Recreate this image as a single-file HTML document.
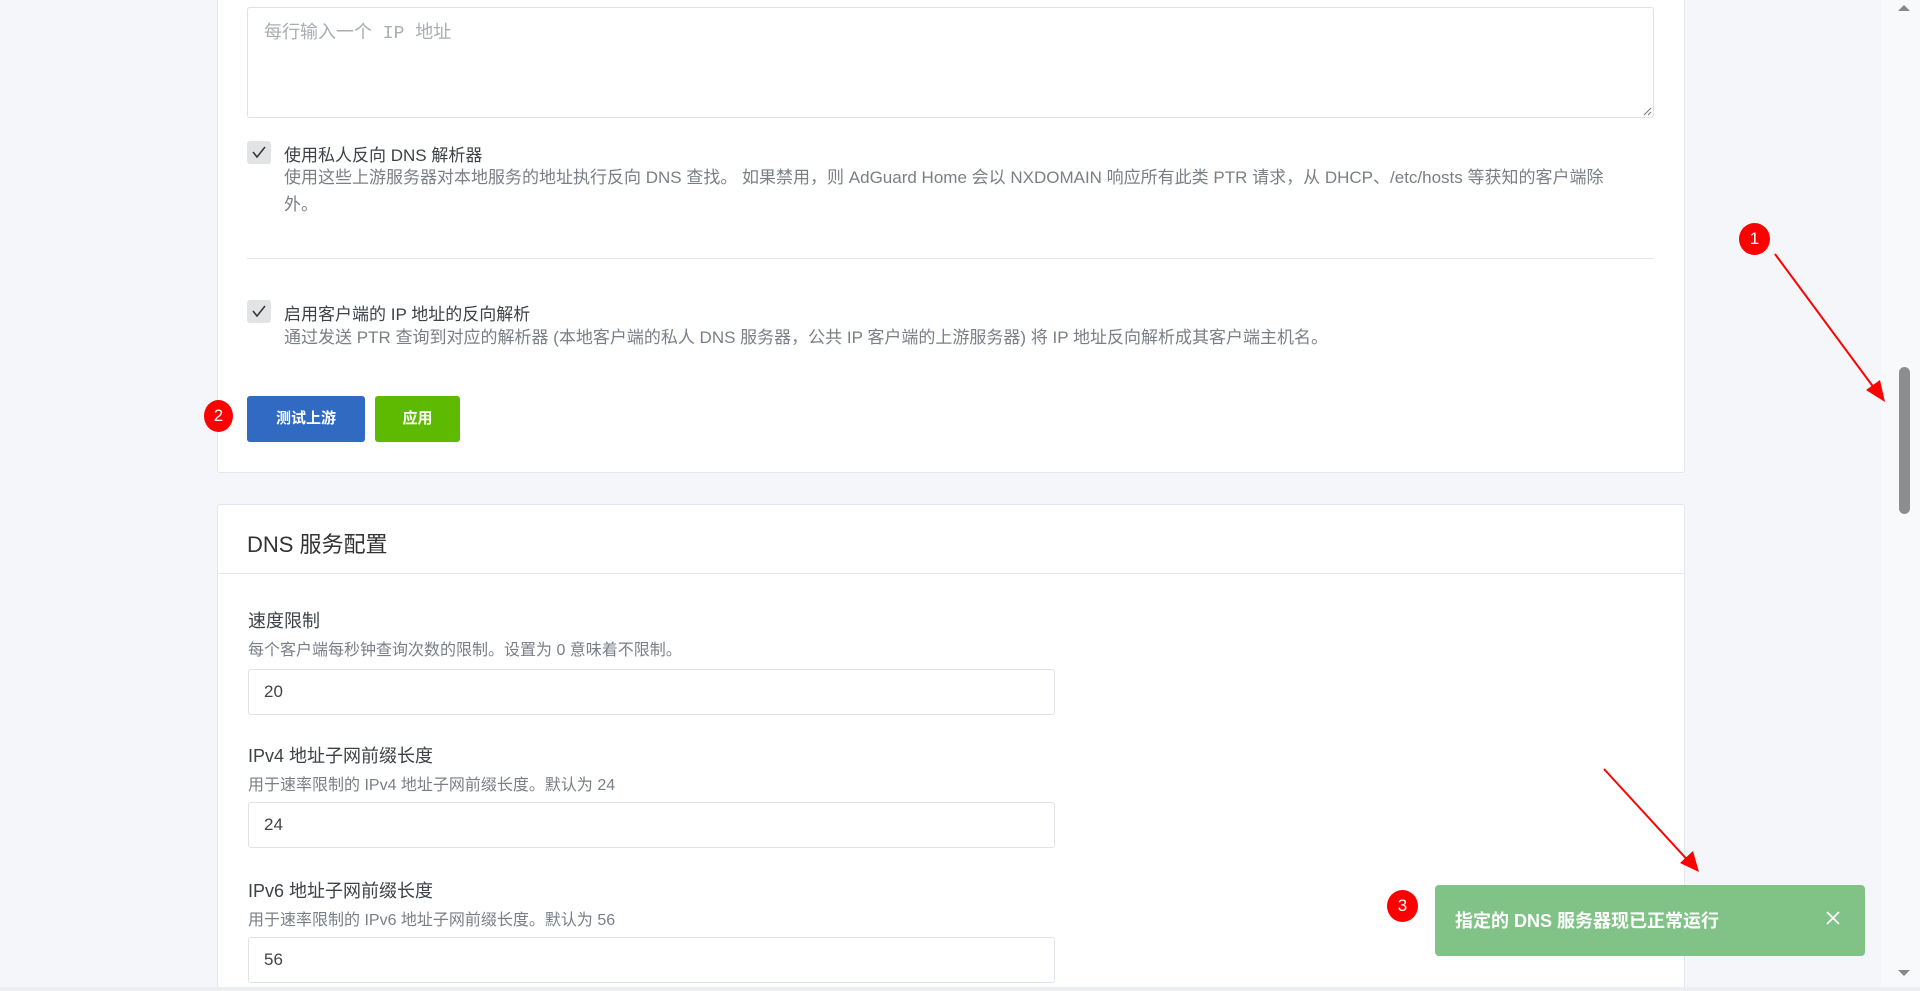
<!DOCTYPE html>
<html><head><meta charset="utf-8"><style>
*{box-sizing:border-box;margin:0;padding:0}
html,body{width:1920px;height:991px;overflow:hidden}
body{background:#f4f6fa;font-family:"Liberation Sans","Noto Sans CJK SC",sans-serif;color:#495057;position:relative}
.card{position:absolute;left:217px;width:1468px;background:#fff;border:1px solid #e3e6ec;border-radius:3px}
.abs{position:absolute}
.cb{position:absolute;width:24px;height:23px;background:#e2e3e5;border-radius:3px}
.cb svg{position:absolute;left:5px;top:5px}
.lbl{position:absolute;font-size:17px;color:#3d4248;white-space:nowrap}
.desc{position:absolute;font-size:17px;color:#7a7f87;line-height:27px}
.small{position:absolute;font-size:16px;color:#7a7f87;white-space:nowrap}
.inp{position:absolute;left:30px;width:807px;height:46px;border:1px solid #dfe2e6;border-radius:3px;font-size:17px;padding:12px 15px;color:#444}
.btn{position:absolute;top:396px;height:46px;color:#fff;font-weight:bold;font-size:15px;text-align:center;line-height:46px;border-radius:3px}
.badge{position:absolute;background:#f00;color:#fff;border-radius:50%;text-align:center;font-size:17px}
</style></head><body>
<div class="card" style="top:-4px;height:477px"></div>
<div class="abs" style="left:247px;top:7px;width:1407px;height:111px;border:1px solid #dfe2e6;border-radius:3px"></div>
<div class="abs" style="left:264px;top:18px;font-size:18px;color:#a8adb3;font-family:'Liberation Mono','Noto Sans CJK SC',monospace">每行输入一个 IP 地址</div>
<svg class="abs" style="left:1642px;top:106px" width="10" height="10"><path d="M9 2L2 9M9 6L6 9" stroke="#777" stroke-width="1"/></svg>

<div class="cb" style="left:247px;top:141px"><svg width="14" height="13"><path d="M1 6L5 11L13 1" stroke="#333" stroke-width="1.5" fill="none"/></svg></div>
<div class="lbl" style="left:284px;top:141px">使用私人反向 DNS 解析器</div>
<div class="desc" style="left:284px;top:164px;width:1330px">使用这些上游服务器对本地服务的地址执行反向 DNS 查找。 如果禁用，则 AdGuard Home 会以 NXDOMAIN 响应所有此类 PTR 请求，从 DHCP、/etc/hosts 等获知的客户端除外。</div>
<div class="abs" style="left:247px;top:258px;width:1407px;height:1px;background:#e3e6ec"></div>
<div class="cb" style="left:247px;top:300px"><svg width="14" height="13"><path d="M1 6L5 11L13 1" stroke="#333" stroke-width="1.5" fill="none"/></svg></div>
<div class="lbl" style="left:284px;top:300px">启用客户端的 IP 地址的反向解析</div>
<div class="desc" style="left:284px;top:324px;white-space:nowrap">通过发送 PTR 查询到对应的解析器 (本地客户端的私人 DNS 服务器，公共 IP 客户端的上游服务器) 将 IP 地址反向解析成其客户端主机名。</div>
<div class="btn" style="left:247px;width:118px;background:#316ac2">测试上游</div>
<div class="btn" style="left:375px;width:85px;background:#5eba00">应用</div>
<div class="badge" style="left:204px;top:400px;width:29px;height:32px;line-height:32px">2</div>

<div class="card" style="top:504px;height:500px">
 <div class="abs" style="left:0;top:68px;width:100%;height:1px;background:#e3e6ec"></div>
 <div class="abs" style="left:29px;top:22px;font-size:22px;color:#333">DNS 服务配置</div>
 <div class="lbl" style="left:30px;top:102px;font-size:18px">速度限制</div>
 <div class="small" style="left:30px;top:131px">每个客户端每秒钟查询次数的限制。设置为 0 意味着不限制。</div>
 <div class="inp" style="top:164px">20</div>
 <div class="lbl" style="left:30px;top:237px;font-size:18px">IPv4 地址子网前缀长度</div>
 <div class="small" style="left:30px;top:266px">用于速率限制的 IPv4 地址子网前缀长度。默认为 24</div>
 <div class="inp" style="top:297px">24</div>
 <div class="lbl" style="left:30px;top:372px;font-size:18px">IPv6 地址子网前缀长度</div>
 <div class="small" style="left:30px;top:401px">用于速率限制的 IPv6 地址子网前缀长度。默认为 56</div>
 <div class="inp" style="top:432px">56</div>
</div>

<div class="abs" style="left:1881px;top:0;width:39px;height:991px;background:#f8f9fa"></div>
<div class="abs" style="left:1899px;top:367px;width:11px;height:147px;background:#8d8d8d;border-radius:6px"></div>
<svg class="abs" style="left:1897px;top:4px" width="14" height="8"><path d="M1 7L7 1L13 7Z" fill="#888"/></svg>
<svg class="abs" style="left:1897px;top:969px" width="14" height="8"><path d="M1 1L7 7L13 1Z" fill="#888"/></svg>
<div class="abs" style="left:0;top:987px;width:1920px;height:4px;background:#eceef1"></div>

<div class="abs" style="left:1435px;top:885px;width:430px;height:71px;background:#81c287;border-radius:4px"></div>
<div class="abs" style="left:1455px;top:907px;font-size:18px;font-weight:bold;color:#fff">指定的 DNS 服务器现已正常运行</div>
<svg class="abs" style="left:1826px;top:911px" width="14" height="14"><path d="M1 1L13 13M13 1L1 13" stroke="#fff" stroke-width="1.8"/></svg>

<div class="badge" style="left:1739px;top:223px;width:31px;height:32px;line-height:32px">1</div>
<div class="badge" style="left:1387px;top:890px;width:31px;height:32px;line-height:32px">3</div>
<svg class="abs" style="left:0;top:0" width="1920" height="991">
<path d="M1775 254L1880 396" stroke="#f00" stroke-width="2"/><path d="M1885 402L1866 390L1880 380Z" fill="#f00"/>
<path d="M1604 769L1693 866" stroke="#f00" stroke-width="2"/><path d="M1699 872L1680 863L1693 851Z" fill="#f00"/>
</svg>
</body></html>
